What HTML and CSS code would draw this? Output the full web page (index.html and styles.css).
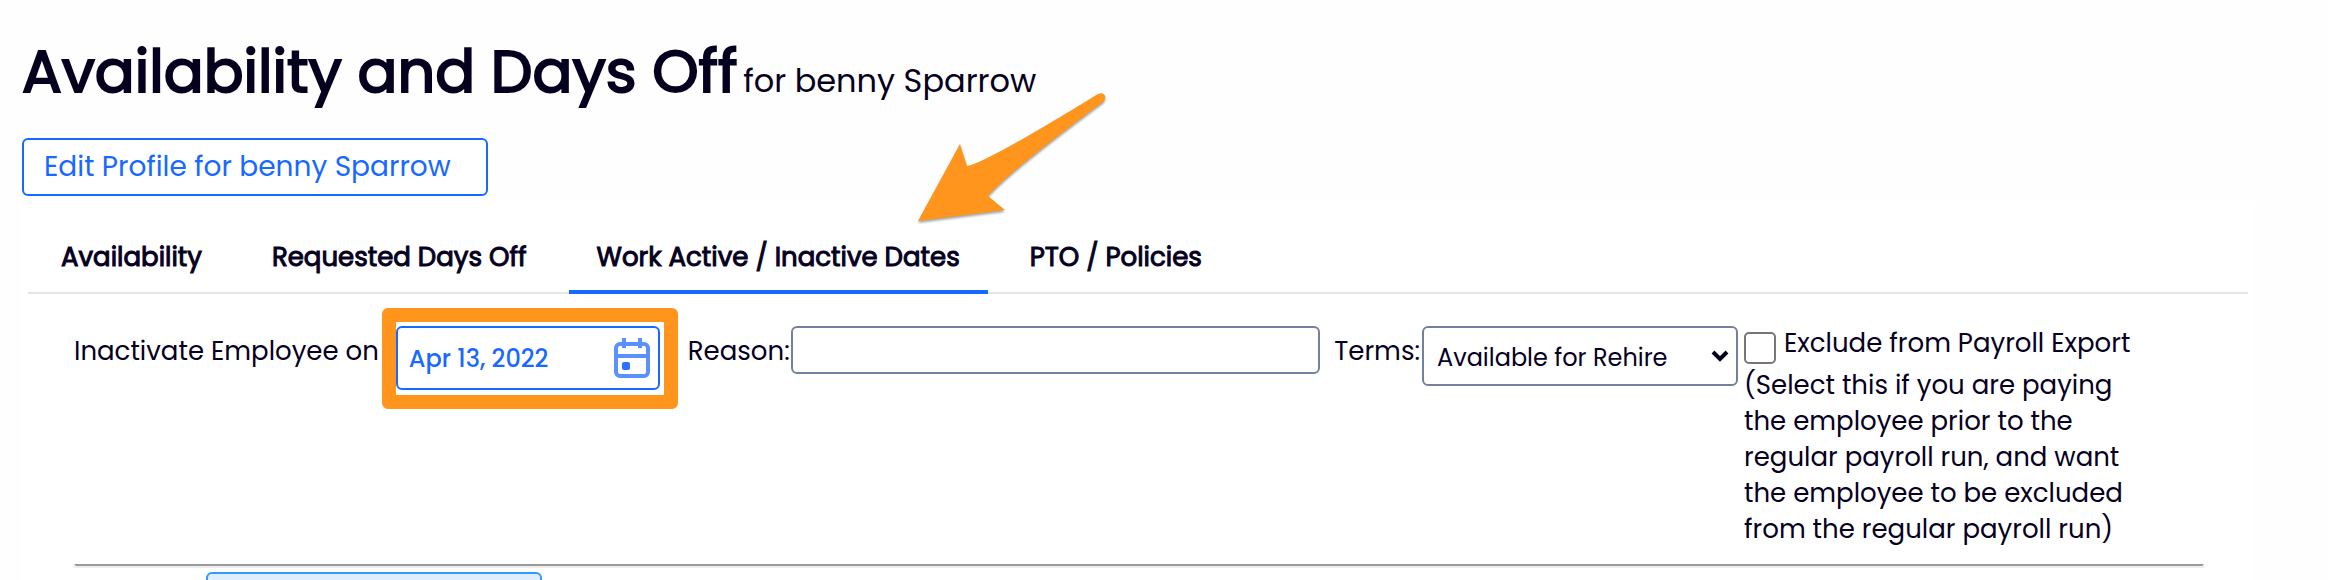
FILE: index.html
```
<!DOCTYPE html>
<html lang="en">
<head>
    <meta charset="UTF-8">
    <meta name="viewport" content="width=device-width, initial-scale=1.0">
    <title>Availability and Days Off</title>
    <link rel="stylesheet" href="styles.css">
</head>
<body>
    <div class="page">
        <header class="page-header">
            <h1>Availability and Days Off <small>for benny Sparrow</small></h1>
            <button type="button" class="edit-profile">Edit Profile for benny Sparrow</button>
        </header>

        <main class="panel">
            <nav class="tabs">
                <a href="#availability">Availability</a>
                <a href="#requested">Requested Days Off</a>
                <a href="#active" class="active">Work Active / Inactive Dates</a>
                <a href="#pto">PTO / Policies</a>
            </nav>

            <form class="inactivate-form">
                <div class="fields">
                    <div class="field">
                        <label for="inactiveDate">Inactivate Employee on</label>
                        <div class="date-field">
                            <input type="text" id="inactiveDate" name="inactiveDate" value="Apr 13, 2022">
                            <svg class="calendar" viewBox="0 0 36 40" aria-hidden="true">
                                <rect x="2" y="6" width="32" height="32" rx="4"/>
                                <path d="M2 18h32M10 0v10M26 0v10"/>
                                <rect class="day" x="8" y="24" width="8" height="8" rx="2"/>
                            </svg>
                            <span class="highlight"></span>
                        </div>
                    </div>
                    <div class="field reason">
                        <label for="reason">Reason:</label>
                        <input type="text" id="reason" name="reason">
                    </div>
                    <div class="field terms">
                        <label for="terms">Terms:</label>
                        <div class="select-wrap">
                            <select id="terms" name="terms">
                                <option>Available for Rehire</option>
                            </select>
                            <svg class="chevron" viewBox="0 0 18 12" aria-hidden="true">
                                <path d="M2 2l7 7 7-7"/>
                            </svg>
                        </div>
                    </div>
                    <div class="exclude">
                        <div class="check">
                            <input type="checkbox" id="exclude" name="exclude">
                            <label for="exclude">Exclude from Payroll Export</label>
                        </div>
                        <p>(Select this if you are paying the employee prior to the regular payroll run, and want the employee to be excluded from the regular payroll run)</p>
                    </div>
                </div>
                <hr>
                <button type="submit" class="submit"></button>
            </form>
        </main>

        <svg class="arrow" viewBox="0 0 200 145" aria-hidden="true">
            <path d="M8 136L50 59L57 81Q74 79 188 9C194 6 198 12 193 17Q100 86 78 111L95 125Z"/>
        </svg>
    </div>
</body>
</html>
```
FILE: styles.css
```
* { box-sizing: border-box; }
body {
    margin: 0;
    background-color: #fefefe;
    color: #06001f;
    font-family: Poppins, Inter, sans-serif;
    font-size: 26px;
    line-height: 36px;
}
input, select, button { font-family: inherit; color: inherit; margin: 0; }
.page {
    position: relative;
    height: 100vh;
    padding: 36px 74px 0 22px;
    overflow: hidden;
}

/* header */
h1 {
    margin: 0 0 30px;
    font-size: 59px;
    font-weight: 400;
    line-height: 72px;
    -webkit-text-stroke: 2px #06001f;
}
h1 small {
    margin-left: -10px;
    font-size: 32px;
    line-height: 36px;
    -webkit-text-stroke: 0;
}
.edit-profile {
    display: block;
    height: 58px;
    padding: 0 35px 0 20px;
    border: 2px solid #1769ff;
    border-radius: 6px;
    background-color: #fff;
    color: #1769ff;
    font-size: 28px;
}

/* tabs */
.panel { margin-top: 6px; padding: 0 6px; background-color: #fff; }
.tabs {
    display: flex;
    gap: 14px;
    padding: 37px 5px 0;
    box-shadow: inset 0 -2px #e4e5ec;
}
.tabs a {
    padding: 0 28px 15px;
    border-bottom: 4px solid transparent;
    color: inherit;
    text-decoration: none;
    -webkit-text-stroke: 1px #06001f;
}
.tabs a.active { border-color: #1769ff; }

/* form */
.inactivate-form { padding: 32px 44px 0 46px; }
.fields { display: flex; align-items: flex-start; }
.field { display: flex; align-items: flex-start; }
.field label { padding-top: 7px; white-space: nowrap; }
.field input, .field select {
    border: 2px solid #7480a0;
    border-radius: 6px;
    background-color: #fff;
    font-size: 24px;
}
.date-field { position: relative; width: 264px; height: 64px; margin-left: 17px; }
.date-field input {
    width: 100%;
    height: 100%;
    padding: 0 60px 0 11px;
    border-color: #1769ff;
    color: #1769ff;
    font-weight: 500;
}
.calendar {
    position: absolute;
    top: 12px;
    right: 10px;
    width: 36px;
    height: 40px;
    fill: none;
    stroke: #5a90ff;
    stroke-width: 4;
}
.calendar .day { fill: #2a72ff; stroke: none; }
.highlight {
    position: absolute;
    top: -18px;
    right: -18px;
    bottom: -19px;
    left: -14px;
    border: 14px solid #ff951c;
    border-radius: 6px;
    pointer-events: none;
}
.reason { flex: 1; margin-left: 28px; }
.reason input { flex: 1; min-width: 0; height: 48px; margin-left: 1px; padding: 0 10px; }
.terms { margin-left: 14px; }
.terms label { padding-right: 2px; }
.select-wrap { position: relative; width: 316px; }
.select-wrap select {
    display: block;
    width: 100%;
    height: 60px;
    padding: 2px 40px 0 13px;
    appearance: none;
}
.chevron {
    position: absolute;
    top: 24px;
    right: 9px;
    width: 18px;
    height: 12px;
    fill: none;
    stroke: #06001f;
    stroke-width: 4;
    pointer-events: none;
}
.exclude { width: 398px; margin: 0 62px 0 6px; }
.check { display: flex; gap: 8px; white-space: nowrap; }
.check label { line-height: 34px; }
.check input {
    width: 32px;
    height: 32px;
    margin-top: 6px;
    border: 2px solid #767676;
    border-radius: 5px;
    background-color: #fff;
    appearance: none;
}
.exclude p { margin: 3px 0 0; }
hr {
    height: 4px;
    margin: 17px 0 4px;
    border: 2px solid #eee;
    border-top-color: #9a9a9a;
}
.submit {
    display: block;
    width: 336px;
    height: 60px;
    margin-left: 132px;
    border: 2px solid #3399ff;
    border-radius: 6px;
    background-color: #deeefd;
}

/* pointer over the active tab */
.arrow {
    position: absolute;
    top: 85px;
    left: 910px;
    width: 200px;
    height: 145px;
    fill: #ff951c;
    filter: drop-shadow(0 2px 1px rgba(0, 0, 0, 0.35));
}
```
